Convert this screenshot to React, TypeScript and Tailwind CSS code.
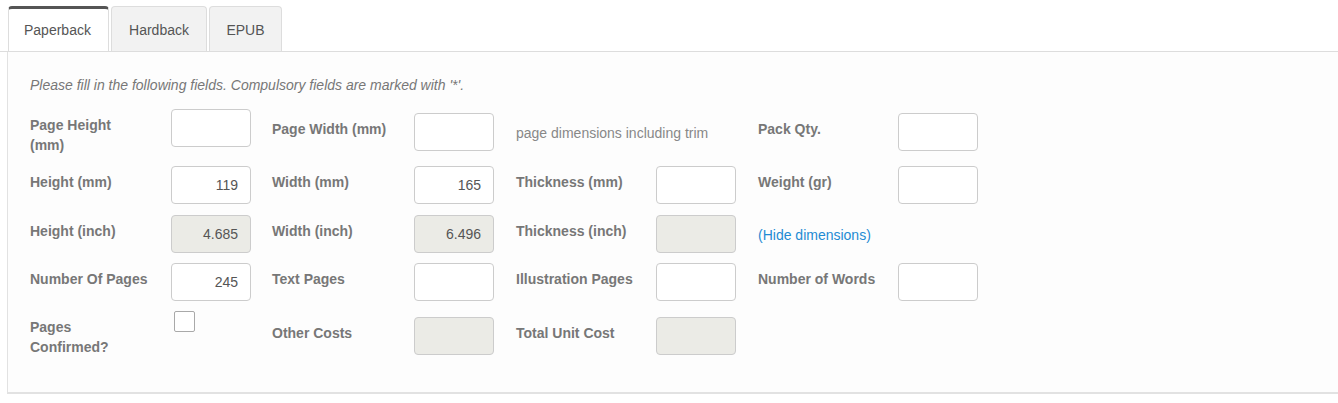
import React from "react";

type Field =
  | { kind: "input"; label: React.ReactNode; value?: string; disabled?: boolean }
  | { kind: "note"; text: string }
  | { kind: "link"; text: string }
  | { kind: "check"; label: React.ReactNode }
  | { kind: "empty" };

const labelCls =
  "pt-[6px] leading-[20px] text-[14px] font-bold text-[#777777] shrink-0";

const labelWidths = ["w-[141px]", "w-[142px]", "w-[140px]", "w-[140px]"];

function Input({ value, disabled }: { value?: string; disabled?: boolean }) {
  return (
    <div
      className={
        "w-[80px] h-[38px] shrink-0 border border-[#cccccc] rounded-[4px] flex items-center justify-end pr-[12px] text-[14px] text-[#555555] " +
        (disabled ? "bg-[#ebebe6]" : "bg-white")
      }
    >
      {value ?? ""}
    </div>
  );
}

function Cell({ f, ci, offset }: { f: Field; ci: number; offset: string }) {
  const lw = labelWidths[ci];
  if (f.kind === "input") {
    return (
      <div className={"flex items-start " + offset}>
        <div className={labelCls + " " + lw}>{f.label}</div>
        <Input value={f.value} disabled={f.disabled} />
      </div>
    );
  }
  if (f.kind === "check") {
    return (
      <div className={"flex items-start " + offset}>
        <div className={labelCls + " " + lw}>{f.label}</div>
        <div className="ml-[3px] w-[21px] h-[21px] border border-[#a9a9a9] rounded-[2px] bg-white" />
      </div>
    );
  }
  if (f.kind === "note") {
    return (
      <div
        className={
          "pt-[10px] leading-[20px] text-[14px] text-[#888888] whitespace-nowrap " + offset
        }
      >
        {f.text}
      </div>
    );
  }
  if (f.kind === "link") {
    return (
      <div
        className={
          "pt-[10px] leading-[20px] text-[14px] text-[#1f8bd3] whitespace-nowrap " + offset
        }
      >
        {f.text}
      </div>
    );
  }
  return <div />;
}

const rows: { h: string; offsets: string[]; fields: Field[] }[] = [
  {
    h: "h-[57px]",
    offsets: ["mt-0", "mt-[4px]", "mt-[4px]", "mt-[4px]"],
    fields: [
      {
        kind: "input",
        label: (
          <>
            Page Height
            <br />
            (mm)
          </>
        ),
      },
      { kind: "input", label: "Page Width (mm)" },
      { kind: "note", text: "page dimensions including trim" },
      { kind: "input", label: "Pack Qty." },
    ],
  },
  {
    h: "h-[49px]",
    offsets: ["mt-0", "mt-0", "mt-0", "mt-0"],
    fields: [
      { kind: "input", label: "Height (mm)", value: "119" },
      { kind: "input", label: "Width (mm)", value: "165" },
      { kind: "input", label: "Thickness (mm)" },
      { kind: "input", label: "Weight (gr)" },
    ],
  },
  {
    h: "h-[48px]",
    offsets: ["mt-0", "mt-0", "mt-0", "mt-0"],
    fields: [
      { kind: "input", label: "Height (inch)", value: "4.685", disabled: true },
      { kind: "input", label: "Width (inch)", value: "6.496", disabled: true },
      { kind: "input", label: "Thickness (inch)", disabled: true },
      { kind: "link", text: "(Hide dimensions)" },
    ],
  },
  {
    h: "h-[48px]",
    offsets: ["mt-0", "mt-0", "mt-0", "mt-0"],
    fields: [
      { kind: "input", label: "Number Of Pages", value: "245" },
      { kind: "input", label: "Text Pages" },
      { kind: "input", label: "Illustration Pages" },
      { kind: "input", label: "Number of Words" },
    ],
  },
  {
    h: "h-[60px]",
    offsets: ["mt-0", "mt-[6px]", "mt-[6px]", "mt-[6px]"],
    fields: [
      {
        kind: "check",
        label: (
          <>
            Pages
            <br />
            Confirmed?
          </>
        ),
      },
      { kind: "input", label: "Other Costs", disabled: true },
      { kind: "input", label: "Total Unit Cost", disabled: true },
      { kind: "empty" },
    ],
  },
];

export default function App() {
  return (
    <div className="w-[1338px] h-[403px] bg-white overflow-hidden pt-[6px] font-['Liberation_Sans',Arial,sans-serif]">
      {/* Tabs */}
      <div className="flex items-end gap-[2px] pl-[8px] border-b border-[#dddddd] h-[46px]">
        <div className="w-[101px] h-[45px] bg-white border-x border-[#dddddd] border-t-[3px] border-t-[#555555] rounded-t-[4px] flex items-center pl-[15px] text-[14px] text-[#555555]">
          Paperback
        </div>
        <div className="w-[96px] h-[45px] bg-[#f2f2f2] border-x border-t border-[#dddddd] rounded-t-[4px] flex items-center justify-center pt-[2px] text-[14px] text-[#555555]">
          Hardback
        </div>
        <div className="w-[73px] h-[45px] bg-[#f2f2f2] border-x border-t border-[#dddddd] rounded-t-[4px] flex items-center justify-center pt-[2px] text-[14px] text-[#555555]">
          EPUB
        </div>
      </div>

      {/* Panel */}
      <div className="ml-[7px] h-[342px] bg-[#fdfdfd] border-l border-b-2 border-[#e2e2e2] pl-[22px] pt-[23px]">
        <div className="leading-[20px] text-[14px] italic text-[#777777] h-[20px]">
          Please fill in the following fields. Compulsory fields are marked with '*'.
        </div>
        <div className="mt-[14px] flex flex-col">
          {rows.map((r, ri) => (
            <div
              key={ri}
              className={"grid grid-cols-[242px_244px_242px_242px] items-start " + r.h}
            >
              {r.fields.map((f, ci) => (
                <Cell key={ci} f={f} ci={ci} offset={r.offsets[ci]} />
              ))}
            </div>
          ))}
        </div>
      </div>
    </div>
  );
}
